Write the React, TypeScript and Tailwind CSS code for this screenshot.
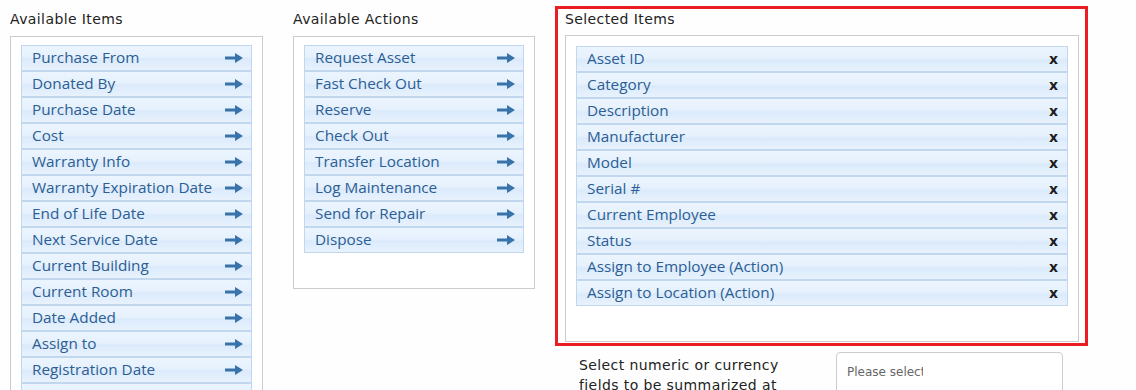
import React from 'react';

const availableItems = [
  'Purchase From',
  'Donated By',
  'Purchase Date',
  'Cost',
  'Warranty Info',
  'Warranty Expiration Date',
  'End of Life Date',
  'Next Service Date',
  'Current Building',
  'Current Room',
  'Date Added',
  'Assign to',
  'Registration Date',
  'Last Audit Date'
];

const availableActions = [
  'Request Asset',
  'Fast Check Out',
  'Reserve',
  'Check Out',
  'Transfer Location',
  'Log Maintenance',
  'Send for Repair',
  'Dispose'
];

const selectedItems = [
  'Asset ID',
  'Category',
  'Description',
  'Manufacturer',
  'Model',
  'Serial #',
  'Current Employee',
  'Status',
  'Assign to Employee (Action)',
  'Assign to Location (Action)'
];

function Arrow() {
  return (
    <svg width="18" height="10" viewBox="0 0 18 10" className="shrink-0">
      <path d="M0 3.5 H10 V0 L18 5 L10 10 V6.5 H0 Z" fill="#3873a9" />
    </svg>
  );
}

function Row({ label, kind }: { label: string; kind: 'add' | 'remove' }) {
  return (
    <div className="flex h-[26px] items-center justify-between border border-[#c1d7ee] bg-[linear-gradient(to_bottom,#ecf5fe_0%,#e6f1fd_45%,#dbeafb_55%,#e8f2fd_100%)] pl-[10px] pr-[8px] font-['Open_Sans',sans-serif] text-[15.3px] leading-none text-[#2b5e94]">
      <span className="whitespace-nowrap">{label}</span>
      {kind === 'add' ? (
        <Arrow />
      ) : (
        <span className="font-['DejaVu_Sans',sans-serif] text-[14px] font-bold text-[#1c1c1c] pr-[1px]">x</span>
      )}
    </div>
  );
}

export default function App() {
  return (
    <div className="h-[390px] overflow-hidden bg-[#fefefe] pt-[6px] font-['DejaVu_Sans',sans-serif]">
      <div className="flex items-start">
        {/* Available items */}
        <div className="ml-[10px] mt-[3px] w-[253px]">
          <h2 className="h-[20px] text-[14px] leading-[20px] tracking-[0.4px] text-[#222]">Available Items</h2>
          <div className="mt-[7px] h-[400px] border border-[#cccccc] bg-white px-[10px] pt-[8px]">
            {availableItems.map(item => (
              <Row key={item} label={item} kind="add" />
            ))}
          </div>
        </div>

        {/* Available actions */}
        <div className="ml-[30px] mt-[3px] w-[242px]">
          <h2 className="h-[20px] text-[14px] leading-[20px] tracking-[0.4px] text-[#222]">Available Actions</h2>
          <div className="mt-[7px] h-[253px] border border-[#cccccc] bg-white px-[10px] pt-[8px]">
            {availableActions.map(item => (
              <Row key={item} label={item} kind="add" />
            ))}
          </div>
        </div>

        {/* Selected items */}
        <div className="ml-[20px] flex flex-col">
          <div className="w-[533px] border-[3px] border-[#ec1c24] pl-[7px] pr-[6px] pb-[1px]">
            <h2 className="h-[20px] text-[14px] leading-[20px] tracking-[0.4px] text-[#222]">Selected Items</h2>
            <div className="mt-[6px] h-[307px] border border-[#cccccc] bg-white px-[10px] pt-[10px]">
              {selectedItems.map(item => (
                <Row key={item} label={item} kind="remove" />
              ))}
            </div>
          </div>

          <div className="mt-[6px] flex items-start">
            <p className="ml-[24px] mt-[3px] w-[215px] text-[14px] leading-[20px] tracking-[0.4px] text-[#222]">
              Select numeric or currency fields to be summarized at the end of the report
            </p>
            <div className="ml-[42px] h-[44px] w-[227px] rounded-[4px] border border-[#cccccc] bg-white pl-[10px] pt-[11px]">
              <span className="block w-[76px] overflow-hidden whitespace-nowrap text-[12px] leading-[16px] text-[#666]">
                Please select
              </span>
            </div>
          </div>
        </div>
      </div>
    </div>
  );
}
